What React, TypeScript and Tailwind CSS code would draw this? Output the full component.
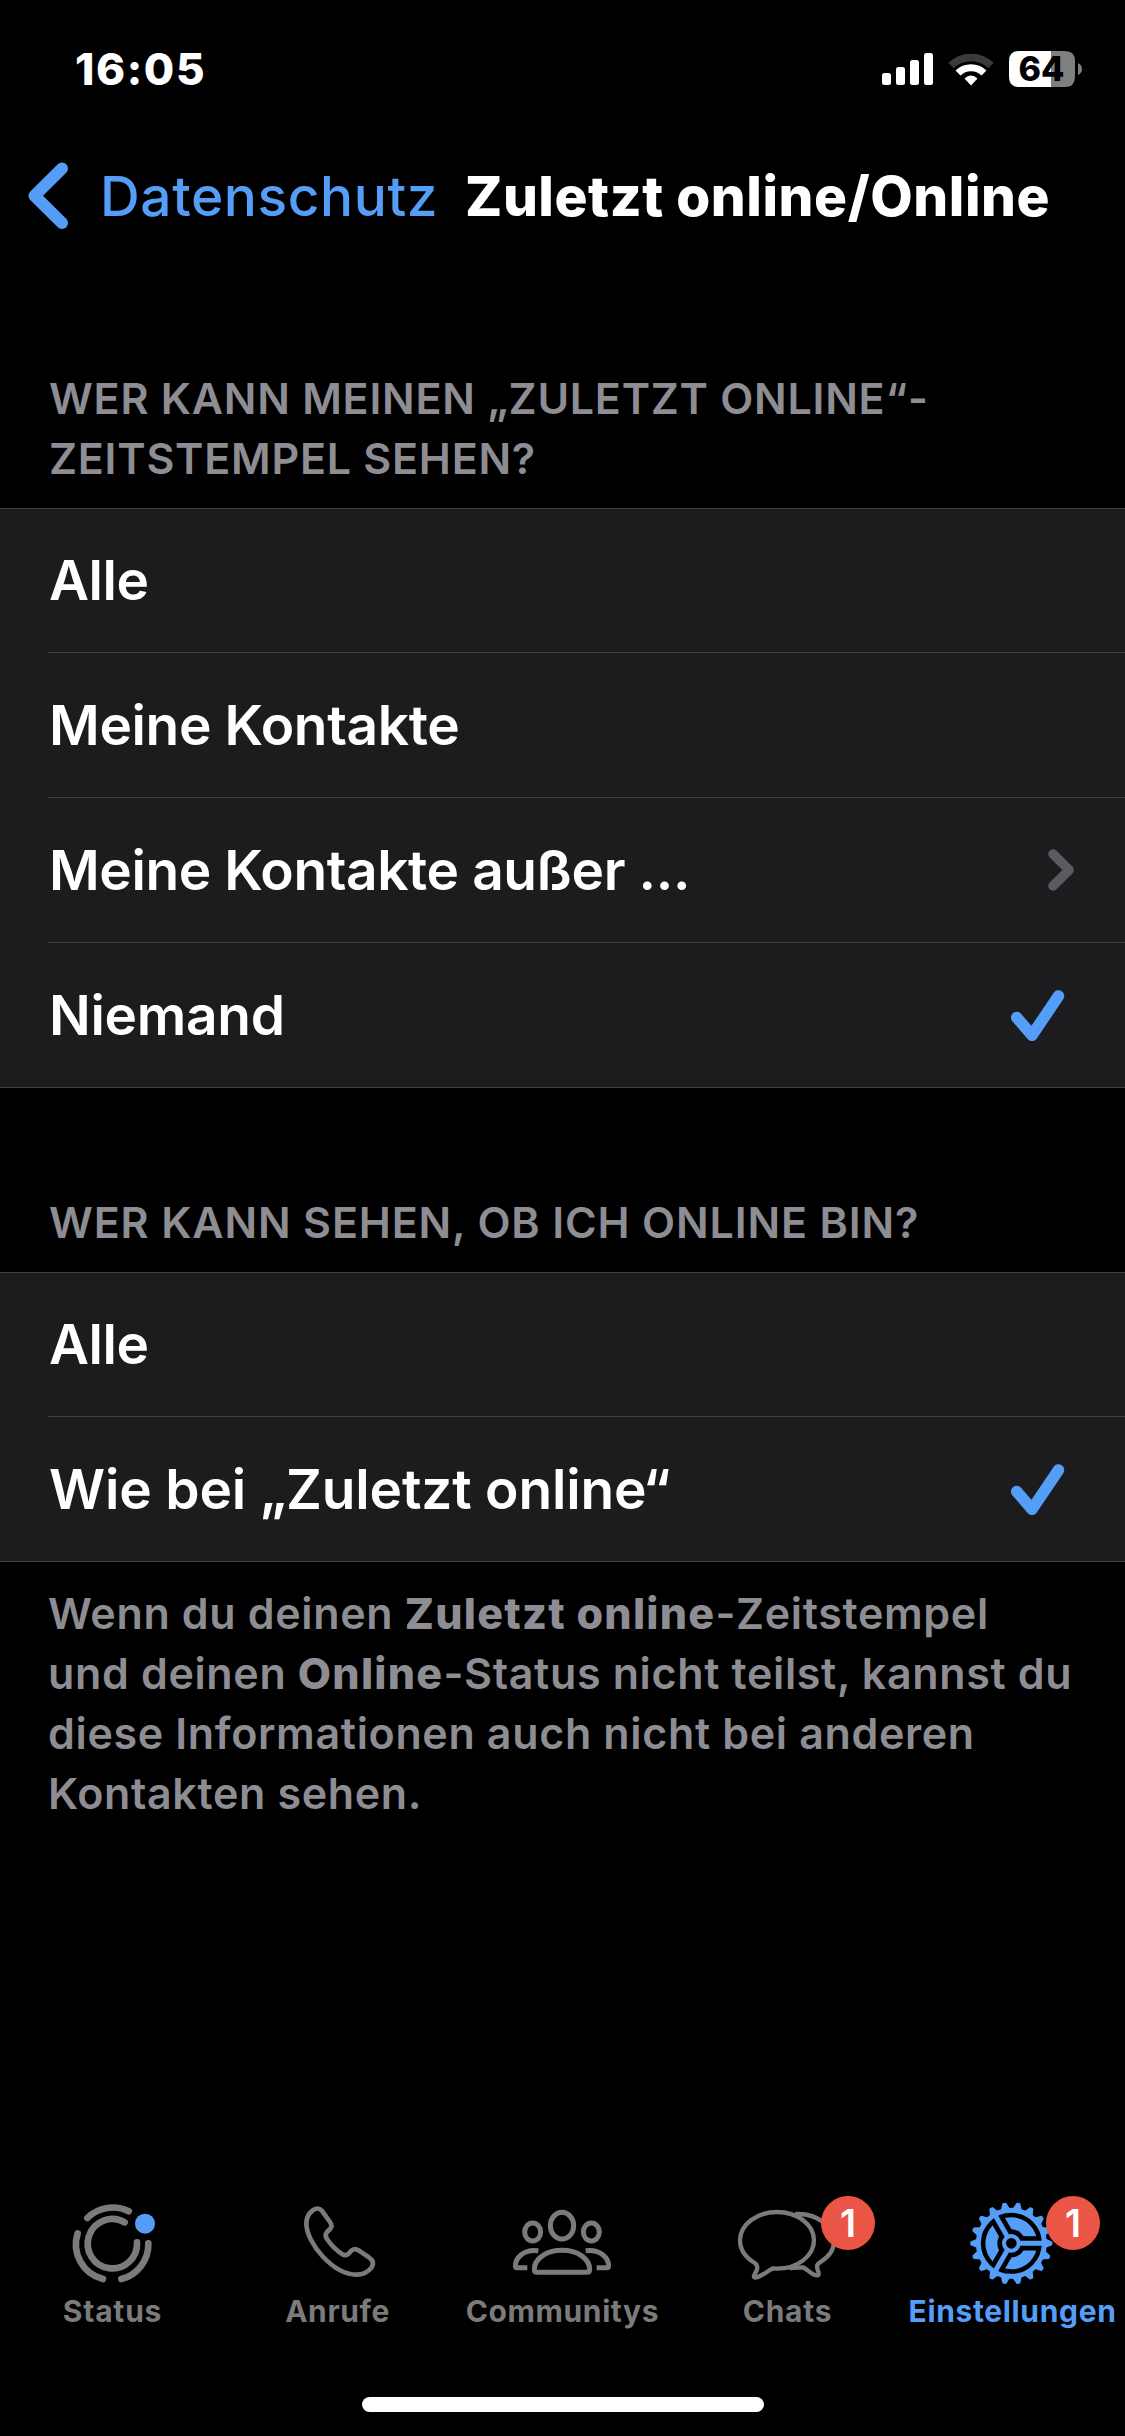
import React from 'react';

interface OptionItem {
    label: string;
    selected?: boolean;
    disclosure?: boolean;
    tracking: string;
}

interface TabItemProps {
    label: string;
    active?: boolean;
    badge?: number;
    tracking: string;
    viewBox: string;
    children: React.ReactNode;
}

const lastSeenOptions: OptionItem[] = [
    { label: 'Alle', tracking: 'tracking-[-0.4px]' },
    { label: 'Meine Kontakte', tracking: 'tracking-[-0.35px]' },
    { label: 'Meine Kontakte außer ...', disclosure: true, tracking: 'tracking-[-0.4px]' },
    { label: 'Niemand', selected: true, tracking: 'tracking-[-0.3px]' },
];

const onlineOptions: OptionItem[] = [
    { label: 'Alle', tracking: 'tracking-[-0.4px]' },
    { label: 'Wie bei „Zuletzt online“', selected: true, tracking: 'tracking-[-0.15px]' },
];

const GEAR_TEETH = Array.from({ length: 18 }, (_, i) => i * 20);
const GEAR_SPOKES = [0, 120, 240];

const StatusBar = () => (
    <div className="flex h-[138px] items-center justify-between pl-[75px] pr-[42px]">
        <span className="text-[44px] font-extrabold leading-none tracking-[1.6px] text-white">16:05</span>
        <svg width="201" height="56" viewBox="882 41 201 56">
            <g fill="#fff">
                <rect x="882" y="73" width="9" height="12" rx="2.5" />
                <rect x="896" y="67" width="9" height="18" rx="2.5" />
                <rect x="910" y="60" width="9" height="25" rx="2.5" />
                <rect x="924" y="53" width="9" height="32" rx="2.5" />
            </g>
            <g fill="none" strokeWidth="7.5">
                <path d="M951 65.5A29 29 0 0 1 991 65.5" stroke="#3a3a3a" />
                <path d="M958 73A18.5 18.5 0 0 1 984 73" stroke="#fff" strokeWidth="7" />
            </g>
            <path d="M964.5 78.5Q971 72.5 977.5 78.5L971 85.5Z" fill="#fff" />
            <path d="M1051 51H1065Q1075 51 1075 61V77Q1075 87 1065 87H1051Z" fill="#7f7f7f" />
            <path d="M1051 51H1019Q1009 51 1009 61V77Q1009 87 1019 87H1051Z" fill="#fff" />
            <path d="M1078 63Q1082 65 1082 69T1078 75Z" fill="#7f7f7f" />
            <text x="1041.5" y="81" textAnchor="middle" fontSize="34" fontWeight="800" fill="#000">64</text>
        </svg>
    </div>
);

const NavBar = () => (
    <div className="flex h-[116px] items-center pl-[28px]">
        <svg width="40" height="68" viewBox="28 162 40 68" fill="none" stroke="#549ef8" strokeWidth="12" strokeLinecap="round" strokeLinejoin="round">
            <path d="M62 168.5L34.5 195.7L62 223" />
        </svg>
        <span className="ml-[32px] w-[365px] whitespace-nowrap text-[55px] font-medium leading-none tracking-[0.6px] text-[#549ef8]">Datenschutz</span>
        <h1 className="whitespace-nowrap text-[55px] font-extrabold leading-none tracking-[0.55px] text-white">Zuletzt online/Online</h1>
    </div>
);

const CheckIcon = () => (
    <svg className="mr-[60px] translate-y-px" width="54" height="52" viewBox="1011 990 54 52" fill="none" stroke="#549ef8" strokeWidth="11.5" strokeLinecap="round" strokeLinejoin="round">
        <path d="M1016.7 1017.5L1032 1035.3L1058.5 996" />
    </svg>
);

const DisclosureIcon = () => (
    <svg className="mr-[50px]" width="27" height="42" viewBox="1048.5 849 27 42" fill="none" stroke="#5a5a5f" strokeWidth="9.5" strokeLinecap="round" strokeLinejoin="round">
        <path d="M1053.5 854L1069.7 870L1053.5 886" />
    </svg>
);

const SectionHeader = ({ className, children }: { className: string; children: React.ReactNode }) => (
    <h2 className={`whitespace-nowrap pb-[20px] pl-[49px] text-[43px] font-[560] leading-[60px] text-[#8d8d93] ${className}`}>
        {children}
    </h2>
);

const OptionGroup = ({ options }: { options: OptionItem[] }) => (
    <ul className="border-y border-[#3d3d41] bg-[#1c1c1e] pl-[48px]">
        {options.map((option, index) => (
            <li
                key={option.label}
                className={`flex items-center justify-between border-[#3d3d41] ${index === 0 ? 'h-[143px]' : 'h-[145px] border-t'}`}
            >
                <span className={`whitespace-nowrap pl-px text-[55px] font-[580] leading-none text-white ${option.tracking}`}>{option.label}</span>
                {option.selected && <CheckIcon />}
                {option.disclosure && <DisclosureIcon />}
            </li>
        ))}
    </ul>
);

const TabItem = ({ label, active, badge, tracking, viewBox, children }: TabItemProps) => (
    <button className={`relative flex w-[225px] flex-col items-center ${active ? 'text-[#549ef8]' : 'text-[#7b7b7b]'}`}>
        <svg width="225" height="115" viewBox={viewBox} fill="none" stroke="currentColor" strokeLinecap="round" strokeLinejoin="round">
            {children}
        </svg>
        <span className={`whitespace-nowrap text-[30px] font-bold leading-[33px] ${tracking}`}>{label}</span>
        {badge && (
            <span className="absolute left-[146px] top-[16px] flex size-[54px] items-center justify-center rounded-full bg-[#eb5545] text-[38px] font-semibold leading-none text-white">
                {badge}
            </span>
        )}
    </button>
);

const StatusIcon = () => (
    <g strokeWidth="20">
        <path d="M262 114A107 107 0 0 1 386 94" />
        <path d="M233 160A107 107 0 0 0 309 297" />
        <path d="M445 190A107 107 0 0 1 364 297" />
        <path d="M374 127A74 74 0 1 0 411 187" />
        <circle cx="435" cy="131" r="30" fill="#549ef8" stroke="none" />
    </g>
);

const CallsIcon = () => (
    <path
        strokeWidth="14"
        d="M937 92Q954 78 967 94L990 126Q999 138 990 147L981 156Q973 165 981 177Q1000 205 1026 222Q1037 230 1047 220L1053 213Q1063 203 1076 211L1108 233Q1125 245 1115 262Q1098 284 1070 284C1000 284 919 190 919 130Q919 107 937 92Z"
    />
);

const CommunityIcon = () => (
    <g strokeWidth="15">
        <ellipse cx="486" cy="137" rx="35" ry="40" />
        <ellipse cx="398" cy="156" rx="24" ry="27" />
        <ellipse cx="574" cy="156" rx="24" ry="27" />
        <path d="M411 277H561Q569 277 569 268C569 236 533 211 486 211S403 236 403 268Q403 277 411 277Z" />
        <path strokeLinecap="butt" d="M415 212C370 206 346 235 346 258Q346 263 351 263H382" />
        <path strokeLinecap="butt" d="M557 212C602 206 626 235 626 258Q626 263 621 263H590" />
    </g>
);

const ChatsIcon = () => (
    <g strokeWidth="13">
        <path d="M218 265C195 279 184 290 166 293C158 292 163 284 168 275C174 264 173 254 164 249C139 234 120 212 120 181C120 134 170 96 231 96S342 134 342 181S292 266 231 266Z" />
        <path d="M290 102C352 100 402 140 402 184C402 210 385 232 360 247C348 254 350 262 355 275C360 290 349 287 340 283C325 275 320 266 308 262L272 264" />
    </g>
);

const GearIcon = () => (
    <g transform="translate(934 190)">
        {GEAR_TEETH.map((angle) => (
            <path key={angle} d="M98 -14L121 -4V4L98 14Z" transform={`rotate(${angle})`} fill="currentColor" stroke="currentColor" strokeWidth="4" />
        ))}
        <circle r="99" strokeWidth="15" />
        <circle r="78" fill="currentColor" stroke="none" />
        {GEAR_SPOKES.map((angle) => (
            <path key={angle} d="M0 0H84" transform={`rotate(${angle})`} stroke="#000" strokeWidth="43" strokeLinecap="butt" />
        ))}
        <circle r="42" fill="#000" stroke="none" />
        {GEAR_SPOKES.map((angle) => (
            <path key={angle} d="M24 0H97" transform={`rotate(${angle})`} strokeWidth="15" />
        ))}
        <circle r="22" fill="#000" strokeWidth="12" />
    </g>
);

const App: React.FC = () => {
    return (
        <div className="flex h-[2436px] w-[1125px] flex-col overflow-hidden bg-black font-['Inter',sans-serif]">
            <StatusBar />
            <NavBar />

            <main className="flex-1">
                <SectionHeader className="pt-[114px] tracking-[0.75px]">
                    WER KANN MEINEN „ZULETZT ONLINE“-
                    <br />
                    ZEITSTEMPEL SEHEN?
                </SectionHeader>
                <OptionGroup options={lastSeenOptions} />

                <SectionHeader className="pt-[104px] tracking-[0.85px]">WER KANN SEHEN, OB ICH ONLINE BIN?</SectionHeader>
                <OptionGroup options={onlineOptions} />

                <p className="whitespace-nowrap pl-[48px] pt-[21px] text-[43px] font-[560] leading-[60px] tracking-[0.65px] text-[#8d8d93]">
                    Wenn du deinen <b className="font-extrabold tracking-[1.25px]">Zuletzt online</b>-Zeitstempel
                    <br />
                    und deinen <b className="font-extrabold tracking-[1.25px]">Online</b>-Status nicht teilst, kannst du
                    <br />
                    diese Informationen auch nicht bei anderen
                    <br />
                    Kontakten sehen.
                </p>
            </main>

            <nav className="flex h-[217px]">
                <TabItem label="Status" tracking="tracking-[0.8px]" viewBox="0 0 675 345">
                    <StatusIcon />
                </TabItem>
                <TabItem label="Anrufe" tracking="tracking-[0.6px]" viewBox="675 0 675 345">
                    <CallsIcon />
                </TabItem>
                <TabItem label="Communitys" tracking="tracking-[0.6px]" viewBox="150 0 675 345">
                    <CommunityIcon />
                </TabItem>
                <TabItem label="Chats" badge={1} tracking="tracking-[0.7px]" viewBox="-75 0 675 345">
                    <ChatsIcon />
                </TabItem>
                <TabItem label="Einstellungen" badge={1} active tracking="tracking-[0.65px]" viewBox="600 0 675 345">
                    <GearIcon />
                </TabItem>
            </nav>
            <div className="h-[39px]">
                <div className="mx-auto h-[15px] w-[402px] rounded-full bg-white" />
            </div>
        </div>
    );
};

export default App;
